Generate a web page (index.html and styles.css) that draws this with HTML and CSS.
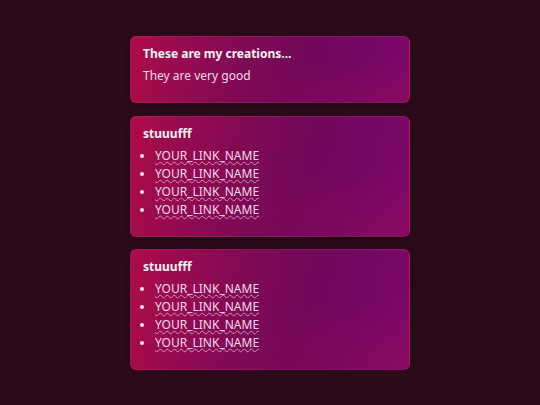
FILE: index.html
```html
<!DOCTYPE html>
<html>
<head>
<meta charset="utf-8">
<link rel="stylesheet" href="styles.css">
</head>
<body>
<main class="stack">
  <section class="card">
    <h3 class="card-title">These are my creations...</h3>
    <p class="card-text">They are very good</p>
  </section>
  <section class="card">
    <h3 class="card-title">stuuufff</h3>
    <ul class="links">
      <li><a href="#">YOUR_LINK_NAME</a></li>
      <li><a href="#">YOUR_LINK_NAME</a></li>
      <li><a href="#">YOUR_LINK_NAME</a></li>
      <li><a href="#">YOUR_LINK_NAME</a></li>
    </ul>
  </section>
  <section class="card">
    <h3 class="card-title">stuuufff</h3>
    <ul class="links">
      <li><a href="#">YOUR_LINK_NAME</a></li>
      <li><a href="#">YOUR_LINK_NAME</a></li>
      <li><a href="#">YOUR_LINK_NAME</a></li>
      <li><a href="#">YOUR_LINK_NAME</a></li>
    </ul>
  </section>
</main>
</body>
</html>
```
FILE: styles.css
```css
html, body {
  margin: 0;
  padding: 0;
  background: #2b0b19;
  font-family: "Noto Sans", "Open Sans", sans-serif;
  color: #f6e4ee;
}
.stack {
  width: 280px;
  margin: 0 auto;
  padding-top: 36px;
  display: flex;
  flex-direction: column;
  gap: 12.5px;
}
.card {
  padding: 9px 12px 17px;
  border-radius: 6px;
  border: 1px solid rgba(255, 120, 200, 0.1);
  background:
    radial-gradient(ellipse 60% 60% at 100% 100%, rgba(160, 10, 85, 0.4), rgba(160, 10, 85, 0) 100%),
    linear-gradient(100deg, #b00c46 0%, #9a0b4e 15%, #820a55 38%, #720859 60%, #720863 80%, #7e086b 100%);
  box-shadow: 0 2px 6px rgba(0, 0, 0, 0.35);
}
.card-title {
  margin: 0 0 5px;
  font-size: 12px;
  line-height: 16px;
  font-weight: 700;
  color: #fdf2f7;
}
.card-text {
  margin: 0;
  font-size: 12px;
  line-height: 18px;
  color: #f4dce8;
}
.links {
  margin: 0;
  padding-left: 12px;
  font-size: 12px;
  line-height: 18px;
}
.links li::marker {
  color: #f6e6ef;
}
.links a {
  color: #f7dbea;
  text-decoration: underline wavy rgba(240, 195, 222, 0.7);
  text-decoration-thickness: 0.5px;
  text-underline-offset: 1px;
}
```
